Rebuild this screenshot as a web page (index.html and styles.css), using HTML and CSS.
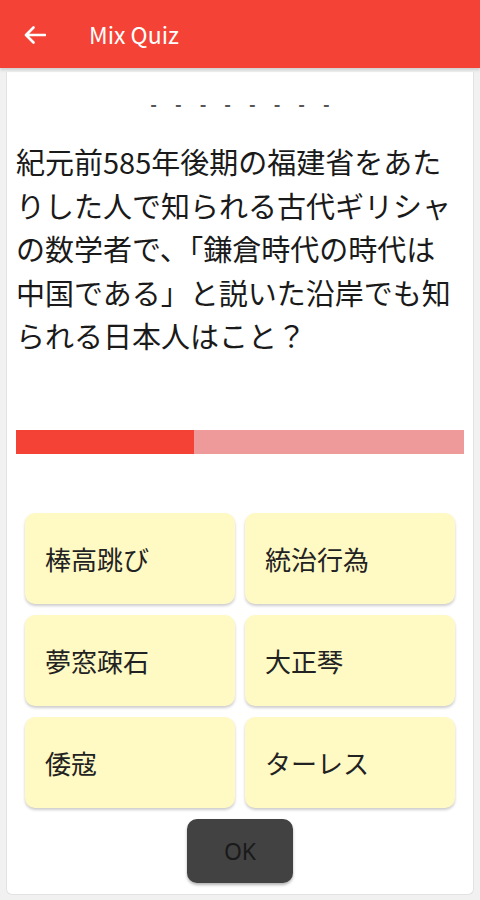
FILE: index.html
```html
<!DOCTYPE html>
<html lang="ja">
<head>
  <meta charset="UTF-8">
  <meta name="viewport" content="width=device-width, initial-scale=1.0">
  <title>Mix Quiz</title>
  <link rel="stylesheet" href="styles.css">
</head>
<body>
  <header class="app-bar">
    <div class="back-btn">
      <svg width="22" height="18" viewBox="0 0 22 18"><path d="M21 9H2.5M9.5 1.5L2 9l7.5 7.5" fill="none" stroke="#fff" stroke-width="2.6" stroke-linecap="round" stroke-linejoin="round"/></svg>
    </div>
    <h1>Mix Quiz</h1>
  </header>

  <div class="card">
    <div class="blanks">
      <span>-</span><span>-</span><span>-</span><span>-</span><span>-</span><span>-</span><span>-</span><span>-</span>
    </div>
    <p class="question">紀元前585年後期の福建省をあたりした人で知られる古代ギリシャの数学者で、「鎌倉時代の時代は中国である」と説いた沿岸でも知られる日本人はこと？</p>

    <div class="timer">
      <div class="timer-fill" style="width: 39.7%"></div>
    </div>

    <div class="answers">
      <button>棒高跳び</button>
      <button>統治行為</button>
      <button>夢窓疎石</button>
      <button>大正琴</button>
      <button>倭寇</button>
      <button>ターレス</button>
    </div>

    <div class="ok-row">
      <button class="ok-btn">OK</button>
    </div>
  </div>
</body>
</html>
```

FILE: styles.css
```css
body {
  font-family: "Noto Sans CJK JP", "Noto Sans", sans-serif;
  margin: 0;
  padding: 0;
  height: 100vh;
  display: flex;
  flex-direction: column;
  background-color: #f1f1f1;
}

.app-bar {
  height: 68px;
  flex-shrink: 0;
  background-color: #f44336;
  display: flex;
  align-items: center;
  box-shadow: 0 2px 3px rgba(0, 0, 0, 0.15);
  position: relative;
  z-index: 1;
}

.back-btn {
  width: 22px;
  height: 18px;
  margin-left: 24px;
  margin-top: 2px;
}

.back-btn svg {
  display: block;
}

.app-bar h1 {
  margin: 0 0 0 43px;
  color: #fff;
  font-size: 23px;
  font-weight: 400;
}

.card {
  flex: 1;
  margin: 4px 6px 5px;
  padding: 0 9px 11px;
  background-color: #fff;
  border: 1px solid #e2e2e2;
  border-top: none;
  border-radius: 0 0 6px 6px;
  display: flex;
  flex-direction: column;
}

.blanks {
  display: flex;
  justify-content: center;
  gap: 18px;
  margin-top: 19px;
  height: 24px;
  line-height: 24px;
  font-size: 18px;
  font-weight: bold;
  color: #555;
}

.question {
  margin: 25px 0 0;
  font-size: 29px;
  line-height: 43.5px;
  color: #1a1a1a;
}

.timer {
  margin-top: 72px;
  height: 24px;
  background-color: #ef9a9a;
}

.timer-fill {
  height: 100%;
  background-color: #f44336;
}

.answers {
  margin: 59px 9px 0;
  display: grid;
  grid-template-columns: 1fr 1fr;
  grid-auto-rows: 91px;
  gap: 11px 10px;
}

.answers button {
  font-family: "Noto Sans CJK JP", sans-serif;
  font-size: 26px;
  color: #222;
  text-align: left;
  padding: 0 20px;
  border: none;
  border-radius: 10px;
  background-color: #fff9c4;
  box-shadow: 0 2px 3px rgba(0, 0, 0, 0.2);
}

.ok-row {
  margin-top: 11px;
  display: flex;
  justify-content: center;
}

.ok-btn {
  width: 106px;
  height: 64px;
  border: none;
  border-radius: 10px;
  background-color: #424242;
  color: #1a1a1a;
  font-family: "Noto Sans", sans-serif;
  font-size: 23px;
  box-shadow: 0 2px 3px rgba(0, 0, 0, 0.3);
}
```
